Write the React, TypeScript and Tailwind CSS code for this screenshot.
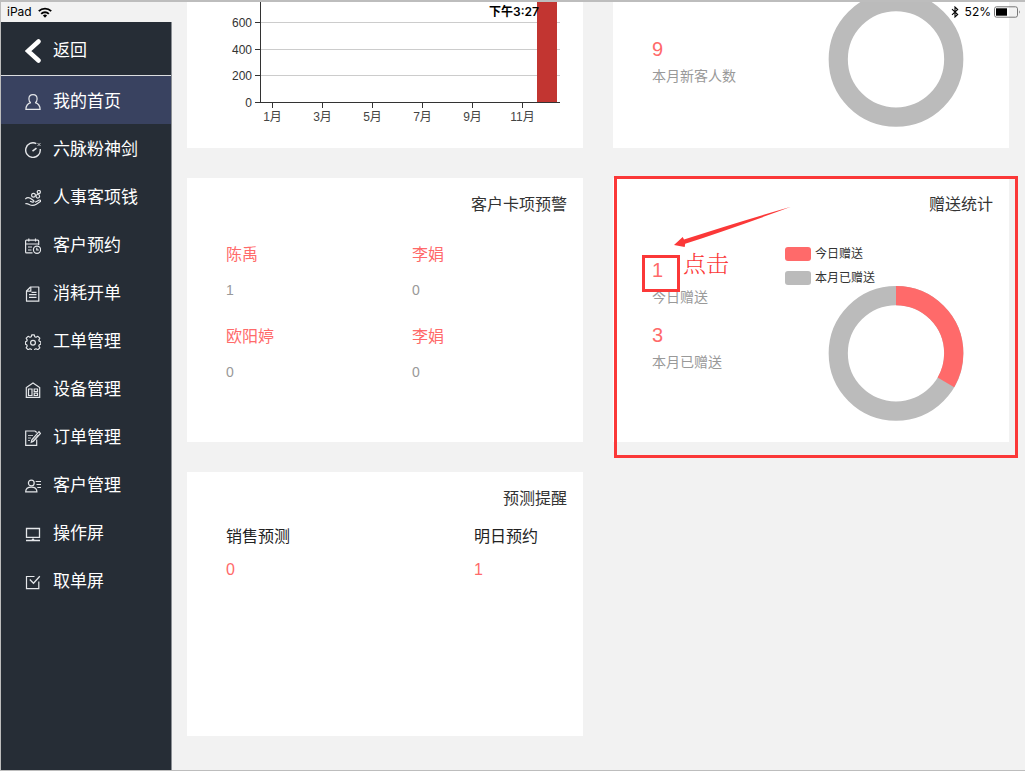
import type { ReactNode } from 'react';

type MenuItem = { label: string; icon: ReactNode; active?: boolean };

const menu: MenuItem[] = [
  {
    label: '我的首页',
    active: true,
    icon: (
      <>
        <path d="M5.800 8.700C4.600 7.900 3.900 6.500 3.900 4.900 3.900 2.500 5.600 .7 8 .7s4.100 1.800 4.100 4.200c0 1.600-.7 3-1.900 3.800" />
        <path d="M5.800 8.700C3 9.500 1 11.800 .9 15.400h14.200c-.1-3.600-2.100-5.900-4.900-6.700" />
      </>
    ),
  },
  {
    label: '六脉粉神剑',
    icon: (
      <>
        <path d="M11.300 1.600A7.300 7.300 0 1 0 15.200 7" strokeWidth="1.400" />
        <path d="M7.500 9.200 11.500 6.200" strokeWidth="1.600" />
        <path d="M12.500 1l3 3M15.500 1l-3 3" strokeWidth=".8" />
      </>
    ),
  },
  {
    label: '人事客项钱',
    icon: (
      <>
        <circle cx="8.500" cy="5.200" r="1.900" />
        <circle cx="13.800" cy="2" r="1.600" />
        <circle cx="12.800" cy="6.300" r="1.800" />
        <path d="M.3 9c1.500-1.600 3.300-1.800 5-.7l3.200 2.200c1 .9.2 1.900-1 1.600L5 11.300" />
        <path d="M.3 13.800c2-.6 3 .2 4.500 1 2 .9 4.700.5 6.500-.5l4-2.700c.8-1-.3-2-1.400-1.400l-3.800 2" />
      </>
    ),
  },
  {
    label: '客户预约',
    icon: (
      <>
        <path d="M7.500 14.800H1.500a.9.900 0 0 1-.9-.9V3a.9.900 0 0 1 .9-.9h11.300a.9.900 0 0 1 .9.900v4M.6 6h13.100M3.800.5v3M10.500.5v3M3 9h4M3 12h3.500" />
        <circle cx="12" cy="11.800" r="3.600" />
        <path d="M11.800 9.800v2.200h2" />
      </>
    ),
  },
  {
    label: '消耗开单',
    icon: (
      <>
        <path d="M5.500 1h8.300v14.200H1.500V5z" strokeLinejoin="round" />
        <path d="M5.800 1v4.200H1.500" />
        <path d="M4 8.700h7.500M6.500 6.300h5M4 11.300h7.500" />
      </>
    ),
  },
  {
    label: '工单管理',
    icon: (
      <>
        <path
          d="M6.700.8h2.600l.5 2 1.200.5 1.900-1 1.900 1.900-1 1.900.5 1.200 1.500.5v2.500l-1.500.5-.5 1.200 1 1.800-1.900 1.900-1.900-1-1.200.5-.5 1.500H6.700l-.5-1.500-1.200-.5-1.900 1-1.900-1.900 1-1.800-.5-1.200L.5 10.300V7.800l1.200-.5.500-1.200-1-1.900 1.900-1.900 1.900 1 1.200-.5z"
          strokeLinejoin="round"
        />
        <circle cx="8" cy="8.800" r="2.400" />
      </>
    ),
  },
  {
    label: '设备管理',
    icon: (
      <>
        <path d="M1.300 15.300V5.500L8 .9l6.700 4.600v9.800z" />
        <path d="M3.500 7h3.500v6.500H3.500zM9.200 7h3.300v2.500H9.200zM9.200 11.200h3.300v2.300H9.200z" />
      </>
    ),
  },
  {
    label: '订单管理',
    icon: (
      <>
        <path d="M10 1H.7v14.300h11V9.500M10 1l1.700 1.500" />
        <path d="M14 1.700 15.400 3.400 8.500 11.200 6.300 12.200 6.900 9.800z" />
        <path d="M3 5.500h5M3 8h3M3 10.500h2M13 5 7.800 11" strokeWidth=".8" />
      </>
    ),
  },
  {
    label: '客户管理',
    icon: (
      <>
        <circle cx="6.300" cy="5" r="2.900" />
        <path d="M.7 13.800c0-3 2-4.600 5.600-4.600s5.600 1.600 5.600 4.600z" />
        <path d="M10.700 3.500H16M11.500 6.500H16M12.300 9.500H16" />
      </>
    ),
  },
  {
    label: '操作屏',
    icon: (
      <>
        <path d="M1.500 2.500h13v8.800h-13zM1 14.500h14M8 12.500v1.500" strokeWidth="1.300" />
        <path d="M6.800 13.500h2.400" />
      </>
    ),
  },
  {
    label: '取单屏',
    icon: (
      <>
        <path d="M9.500 2.500H1.500v12.200h12.300V7.500" />
        <path d="M4.800 5.500 8.500 9.300 14.800 2.300" strokeWidth="1.300" />
      </>
    ),
  },
];

const bottomTicks = [
  { x: 85.5, label: '1月' },
  { x: 135.5, label: '3月' },
  { x: 185.5, label: '5月' },
  { x: 235.5, label: '7月' },
  { x: 285.5, label: '9月' },
  { x: 335.5, label: '11月' },
];

const leftTicks = [
  { y: 138.5, label: '600' },
  { y: 165.5, label: '400' },
  { y: 191.5, label: '200' },
];

const warnings = [
  { name: '陈禹', count: 1 },
  { name: '李娟', count: 0 },
  { name: '欧阳婷', count: 0 },
  { name: '李娟', count: 0 },
];

function StatusBar() {
  return (
    <header className="absolute inset-x-0 top-0 z-20 grid h-5 grid-cols-3 items-center pr-1 pl-1.5 font-['Inter','Noto_Sans_CJK_SC',sans-serif] text-[12px] leading-5 text-black">
      <div className="flex items-center gap-1.5">
        <span>iPad</span>
        <svg className="h-[11px] w-[14px]" viewBox="0 0 14 11" fill="none" stroke="#000" strokeWidth="1.900" aria-hidden="true">
          <path d="M.8 4.200a8.800 8.800 0 0 1 12.400 0" />
          <path d="M3.200 6.800a5.400 5.400 0 0 1 7.600 0" />
          <path d="M4.900 8.500a3 3 0 0 1 4.200 0L7 10.700z" fill="#000" stroke="none" />
        </svg>
      </div>
      <time className="text-center font-semibold">下午3:27</time>
      <div className="flex items-center justify-end gap-[3px]">
        <svg className="mr-[3px] h-3 w-2" viewBox="0 0 8 12" fill="none" stroke="#000" strokeWidth="1.100" aria-hidden="true">
          <path d="M1 3.200 6.700 8.500 4 11V1l2.700 2.500L1 8.800" />
        </svg>
        <span>52%</span>
        <svg className="h-3 w-[27px]" viewBox="0 0 27 12" aria-hidden="true">
          <rect x=".5" y=".8" width="23" height="10.400" rx="2" fill="none" stroke="#777" />
          <rect x="2" y="2.300" width="11" height="7.400" fill="#000" />
          <path d="M25 4.200q1.800 1.800 0 3.600z" fill="#777" />
        </svg>
      </div>
    </header>
  );
}

function Sidebar() {
  return (
    <aside className="w-[171px] shrink-0 pt-5">
      <div className="h-full border-r border-[#8b8f94] bg-[#262d36] text-white">
        <button type="button" className="flex h-[54px] w-full items-center gap-3 border-b border-[#dcdee0] pt-1 pl-6 text-[17px]">
          <svg className="h-6 w-4" viewBox="0 0 16 24" fill="none" stroke="#fff" strokeWidth="4.500" aria-hidden="true">
            <path d="M13.500 2.500 3 12 13.500 21.500" strokeLinecap="round" />
          </svg>
          返回
        </button>
        <nav>
          <ul>
            {menu.map((item) => (
              <li key={item.label}>
                <a
                  href="#"
                  aria-current={item.active ? 'page' : undefined}
                  className={
                    item.active
                      ? 'flex h-12 items-center gap-3 bg-[#394260] pt-1 pl-6 text-[17px]'
                      : 'flex h-12 items-center gap-3 pt-1 pl-6 text-[17px]'
                  }
                >
                  <svg className="h-4 w-4 shrink-0" viewBox="0 0 16 16" fill="none" stroke="#e4e6e9" strokeWidth="1.200" aria-hidden="true">
                    {item.icon}
                  </svg>
                  {item.label}
                </a>
              </li>
            ))}
          </ul>
        </nav>
      </div>
    </aside>
  );
}

function Card({ title, children }: { title?: string; children: ReactNode }) {
  return (
    <section className="relative flex h-[264px] flex-col bg-white">
      {title ? (
        <h2 className="flex h-[52px] shrink-0 items-center justify-end pt-0.5 pr-4 text-[16px] text-[#333]">{title}</h2>
      ) : null}
      {children}
    </section>
  );
}

function BarChart() {
  return (
    <svg className="h-full w-full" viewBox="0 0 396 264" role="img" aria-label="月度统计">
      <g shapeRendering="crispEdges">
        {leftTicks.map((t) => (
          <g key={t.label}>
            <path d={`M73 ${t.y}H373`} stroke="#ccc" />
            <path d={`M68 ${t.y}H73`} stroke="#333" />
          </g>
        ))}
        <rect x="350" y="100" width="20" height="118" fill="#c23531" />
        <path d="M73.5 100V218.500M68 218.500H373" stroke="#333" />
        {bottomTicks.map((t) => (
          <path key={t.label} d={`M${t.x} 218V224`} stroke="#333" />
        ))}
      </g>
      <g fill="#333" fontSize="12" textAnchor="end">
        {leftTicks.map((t) => (
          <text key={t.label} x="65" y={t.y + 4}>
            {t.label}
          </text>
        ))}
        <text x="65" y="222.500">0</text>
      </g>
      <g fill="#444" fontSize="12" textAnchor="middle">
        {bottomTicks.map((t) => (
          <text key={t.label} x={t.x} y="237">
            {t.label}
          </text>
        ))}
      </g>
    </svg>
  );
}

function Donut({ share, legend }: { share: number; legend?: { label: string; color: string }[] }) {
  const r = 57.75;
  const length = 2 * Math.PI * r;
  return (
    <svg className="h-[212px] w-[224px] shrink-0" viewBox="0 0 224 212" role="img" aria-label="占比">
      {legend?.map((l, i) => (
        <g key={l.label}>
          <rect x="0" y={17 + i * 24} width="26" height="14" rx="3" fill={l.color} />
          <text x="30" y={28 + i * 24} fontSize="12" fill="#333">
            {l.label}
          </text>
        </g>
      ))}
      <g fill="none" strokeWidth="19.200">
        <circle cx="111" cy="123.300" r={r} stroke="#bbb" />
        {share > 0 ? (
          <circle
            cx="111"
            cy="123.300"
            r={r}
            stroke="#ff6a6a"
            strokeDasharray={`${length * share} ${length}`}
            transform="rotate(-90 111 123.300)"
          />
        ) : null}
      </g>
    </svg>
  );
}

function Stat({ value, label }: { value: number; label: string }) {
  return (
    <div className="h-[65px]">
      <div className="h-7 text-[20px] leading-7 text-[#ff6a6a]">{value}</div>
      <div className="text-[14px] leading-[26px] text-[#999]">{label}</div>
    </div>
  );
}

function Annotation() {
  return (
    <>
      <div className="pointer-events-none absolute -top-0.5 -right-[9px] -bottom-4 left-px border-3 border-[#fb3838]" />
      <div className="pointer-events-none absolute top-[77px] left-[29px] h-[37px] w-[38px] border-3 border-[#fb3838]" />
      <svg className="pointer-events-none absolute top-7 left-[60px] h-[42px] w-[120px]" viewBox="0 0 120 42" fill="#fb3838" aria-hidden="true">
        <path d="M1 39 9.700 31l1.300 2.600Q60 17.500 118 .8 62 21.500 12.200 37.800l-.5 3.200z" />
      </svg>
      <span className="pointer-events-none absolute top-[69px] left-[70px] font-['Noto_Serif_CJK_SC','Noto_Sans_CJK_SC',serif] text-[23px] leading-8 font-light text-[#fb3838]">
        点击
      </span>
    </>
  );
}

export default function App() {
  return (
    <div className="relative flex h-screen flex-col overflow-hidden border-t-2 border-b border-l border-[#bdbdbd] bg-[#f2f2f2] font-['Liberation_Sans','Noto_Sans_CJK_SC',sans-serif]">
      <StatusBar />
      <div className="flex min-h-0 flex-1">
        <Sidebar />
        <main className="min-w-0 flex-1 overflow-hidden pr-4 pl-[15px]">
          <div className="-mt-[118px] grid grid-cols-2 gap-[30px]">
            <Card>
              <BarChart />
            </Card>
            <Card>
              <div className="flex pt-[52px]">
                <div className="flex-1 pt-[99px] pl-[39px]">
                  <Stat value={9} label="本月新客人数" />
                </div>
                <Donut share={0} />
              </div>
            </Card>
            <Card title="客户卡项预警">
              <dl className="grid grid-cols-[186fr_171fr] gap-y-2.5 pt-1.5 pl-[39px]">
                {warnings.map((w, i) => (
                  <div key={i}>
                    <dt className="h-9 text-[16px] leading-[38px] text-[#ff6a6a]">{w.name}</dt>
                    <dd className="h-9 text-[14px] leading-9 text-[#999]">{w.count}</dd>
                  </div>
                ))}
              </dl>
            </Card>
            <Card title="赠送统计">
              <div className="flex">
                <div className="flex-1 pt-[26px] pl-[39px]">
                  <Stat value={1} label="今日赠送" />
                  <Stat value={3} label="本月已赠送" />
                </div>
                <Donut
                  share={1 / 3}
                  legend={[
                    { label: '今日赠送', color: '#ff6a6a' },
                    { label: '本月已赠送', color: '#bbb' },
                  ]}
                />
              </div>
              <Annotation />
            </Card>
            <Card title="预测提醒">
              <dl className="grid grid-cols-[248fr_109fr] pt-px pl-[39px] text-[16px] leading-6">
                <div>
                  <dt className="text-[#222]">销售预测</dt>
                  <dd className="pt-[9px] text-[#ff6a6a]">0</dd>
                </div>
                <div>
                  <dt className="text-[#222]">明日预约</dt>
                  <dd className="pt-[9px] text-[#ff6a6a]">1</dd>
                </div>
              </dl>
            </Card>
          </div>
        </main>
      </div>
    </div>
  );
}
